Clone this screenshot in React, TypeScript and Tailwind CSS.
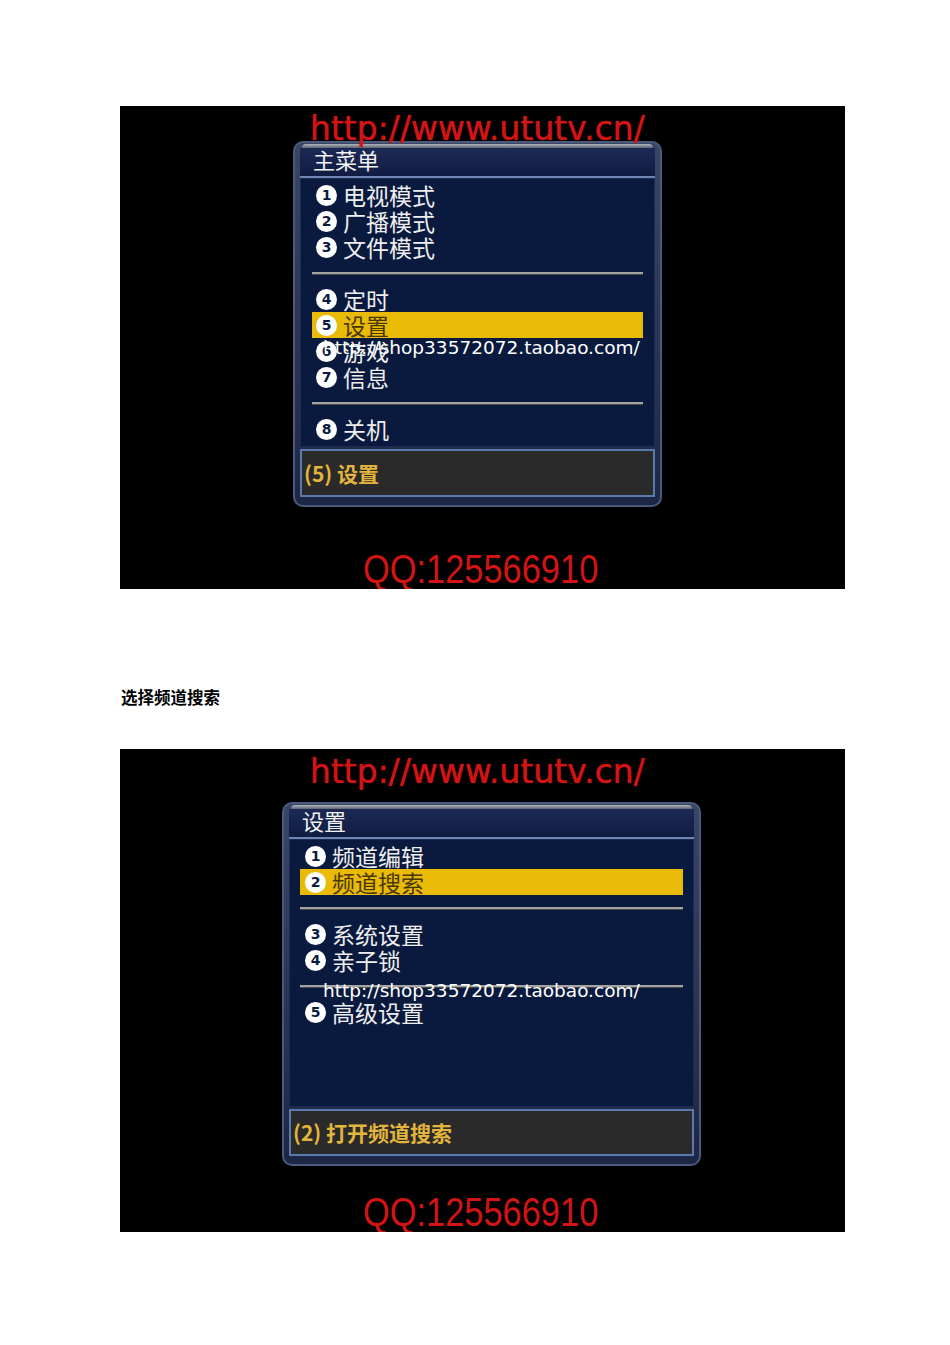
import React from 'react';

type PanelProps = {
  title: string;
  groups: string[][];
  active: number;
  info: string;
  widthClass: string;
  bodyClass: string;
  rowClass: string;
  infoClass: string;
};

const cjk = "font-['Noto_Sans_CJK_SC',sans-serif]";

function Panel({ title, groups, active, info, widthClass, bodyClass, rowClass, infoClass }: PanelProps) {
  let n = 0;
  return (
    <div className={`${widthClass} rounded-[10px] border-2 border-[#4b5a7c] bg-[linear-gradient(180deg,#3a4666,#1d2745)] px-[5px] pb-[8px]`}>
      <div className="flex h-[33px] flex-col">
        <div className="mx-[2px] mt-[1px] h-[5px] rounded-t-[6px] bg-[linear-gradient(180deg,#b0b4bc,#5c6272)]" />
        <div className={`flex flex-1 items-center bg-[linear-gradient(180deg,#1b2a55,#101c42)] pb-[6px] pl-[13px] text-[22px] leading-none text-[#f2f2f2] ${cjk}`}>
          {title}
        </div>
      </div>
      <div className="h-[2px] bg-[#6f86b4]" />
      <div className={`${bodyClass} border border-[#1c2b52] bg-[#0a1a3e] pt-[3px]`}>
        {groups.map((group, gi) => (
          <div key={gi}>
            {gi > 0 && <div className="mb-[11px] mt-[12px] h-[3px] border-b border-[#4a4a4a] bg-[#a3a3a3]" />}
            {group.map((label) => {
              n += 1;
              const on = n === active;
              return (
                <div key={label} className={`${rowClass} flex h-[26px] items-center gap-[6px] ${on ? 'bg-[#e9bb07]' : ''}`}>
                  <span className="flex h-[21px] w-[21px] items-center justify-center rounded-full bg-white font-['DejaVu_Sans',sans-serif] text-[14px] font-bold leading-none text-[#0a1a3e]">
                    {n}
                  </span>
                  <span className={`text-[23px] leading-none ${cjk} ${on ? 'text-[#4a3600]' : 'text-[#eeeeee]'}`}>{label}</span>
                </div>
              );
            })}
          </div>
        ))}
      </div>
      <div className={`${infoClass} mt-[2px] flex items-center border-2 border-[#5a7aae] bg-[#2a2a2a] pl-[2px]`}>
        <span className={`text-[21px] font-bold leading-none text-[#e3b53c] ${cjk}`}>{info}</span>
      </div>
    </div>
  );
}

function Screen({ children, urlTop, shopTop }: { children: React.ReactNode; urlTop: string; shopTop: string }) {
  return (
    <div className="relative ml-[120px] h-[483px] w-[725px] overflow-hidden bg-black">
      {children}
      <div className={`absolute left-[190px] ${urlTop} font-['DejaVu_Sans',sans-serif] text-[33px] leading-none text-[#d21414] [text-shadow:0_0_1px_#d21414]`}>
        http://www.ututv.cn/
      </div>
      <div className={`absolute left-[203px] ${shopTop} font-['DejaVu_Sans',sans-serif] text-[18.5px] leading-none text-white`}>
        http://shop33572072.taobao.com/
      </div>
      <div className="absolute left-[243px] top-[443px] origin-left scale-x-[0.86] font-['Liberation_Sans',sans-serif] text-[40px] leading-none text-[#d21414]">
        QQ:125566910
      </div>
    </div>
  );
}

export default function App() {
  return (
    <div className="min-h-[1345px] w-[950px] bg-white pt-[106px]">
      <Screen urlTop="top-[6px]" shopTop="top-[233px]">
        <div className="pl-[173px] pt-[35px]">
          <Panel
            title="主菜单"
            groups={[['电视模式', '广播模式', '文件模式'], ['定时', '设置', '游戏', '信息'], ['关机']]}
            active={5}
            info="(5) 设置"
            widthClass="w-[369px]"
            bodyClass="h-[269px] px-[11px]"
            rowClass="pl-[4px]"
            infoClass="h-[48px]"
          />
        </div>
      </Screen>

      <div className={`ml-[121px] mt-[96px] h-[24px] text-[16.5px] font-bold leading-[24px] text-black ${cjk}`}>选择频道搜索</div>

      <div className="mt-[40px]">
        <Screen urlTop="top-[6px]" shopTop="top-[233px]">
          <div className="pl-[162px] pt-[53px]">
            <Panel
              title="设置"
              groups={[['频道编辑', '频道搜索'], ['系统设置', '亲子锁'], ['高级设置']]}
              active={2}
              info="(2) 打开频道搜索"
              widthClass="w-[419px]"
              bodyClass="h-[268px] px-[10px]"
              rowClass="pl-[5px]"
              infoClass="h-[47px]"
            />
          </div>
        </Screen>
      </div>
    </div>
  );
}
